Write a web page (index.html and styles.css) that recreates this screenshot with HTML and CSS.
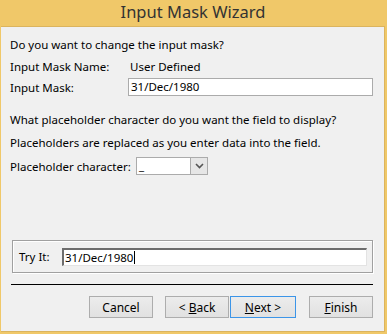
FILE: index.html
```html
<!DOCTYPE html>
<html>
<head>
<meta charset="utf-8">
<link rel="stylesheet" href="styles.css">
</head>
<body>
<div class="window">
  <div class="titlebar">Input Mask Wizard</div>
  <div class="client">
    <div class="line q1">Do you want to change the input mask?</div>
    <div class="row r-name"><span class="lbl">Input Mask Name:</span><span class="val">User Defined</span></div>
    <div class="row r-mask"><span class="lbl">Input Mask:</span><span class="textbox mask">31/Dec/1980</span></div>
    <div class="line q2">What placeholder character do you want the field to display?</div>
    <div class="line q3">Placeholders are replaced as you enter data into the field.</div>
    <div class="row r-ph"><span class="lbl">Placeholder character:</span><span class="combo"><span class="combo-text">_</span><span class="combo-btn"><svg width="9" height="6" viewBox="0 0 9 6"><path d="M1 1 L4.5 4.5 L8 1" fill="none" stroke="#555" stroke-width="1.6"/></svg></span></span></div>
    <div class="spacer"></div>
    <div class="tryit">
      <span class="try-lbl">Try It:</span>
      <span class="try-box">31/Dec/1980<span class="caret"></span></span>
    </div>
    <div class="sep"></div>
    <div class="buttons">
      <button class="btn">Cancel</button>
      <button class="btn back">&lt; <u>B</u>ack</button>
      <button class="btn next"><u>N</u>ext &gt;</button>
      <button class="btn finish"><u>F</u>inish</button>
    </div>
  </div>
</div>
</body>
</html>
```
FILE: styles.css
```css
* { box-sizing: border-box; }
html, body { margin: 0; padding: 0; }
body {
  width: 387px;
  height: 334px;
  overflow: hidden;
  font-family: "Noto Sans", "Open Sans", sans-serif;
  font-size: 11.5px;
  color: #000;
}
.window {
  width: 387px;
  height: 334px;
  background: #f0c869;
  display: flex;
  flex-direction: column;
  padding: 0 2px 2px 1px;
}
.titlebar {
  height: 26px;
  line-height: 24px;
  text-align: center;
  font-size: 16.5px;
  color: #333;
  flex: none;
}
.client {
  flex: 1;
  background: #f0f0f0;
  border: 1px solid #dbb45e;
  border-left: none;
  display: flex;
  flex-direction: column;
  padding: 0 11px 0 9px;
}
.line { height: 16px; line-height: 16px; white-space: nowrap; }
.q1 { margin-top: 10px; }
.row { display: flex; align-items: center; white-space: nowrap; }
.lbl { width: 120px; flex: none; }
.r-name { margin-top: 5px; height: 16px; }
.r-mask { margin-top: 4px; height: 18px; }
.textbox {
  display: block;
  flex: 1;
  height: 18px;
  line-height: 16px;
  background: #fff;
  border: 1px solid #ababab;
  padding-left: 2px;
  margin-left: -2px;
}
.q2 { margin-top: 16px; }
.q3 { margin-top: 7px; }
.r-ph { margin-top: 6px; height: 18px; }
.combo {
  display: flex;
  flex: none;
  width: 72px;
  height: 18px;
  margin-left: 6px;
  border: 1px solid #ababab;
  background: #fff;
}
.combo-text { flex: 1; padding-left: 2px; line-height: 16px; }
.combo-btn {
  width: 17px;
  background: #e6e6e6;
  border-left: 1px solid #ababab;
  display: flex;
  align-items: center;
  justify-content: center;
}
.spacer { flex: 1; }
.tryit {
  height: 33px;
  margin: 0 0 0 2px;
  border: 1px solid #a0a0a0;
  box-shadow: inset 1px 1px 0 #fff, 1px 1px 0 #fff;
  display: flex;
  align-items: center;
  padding-left: 6px;
}
.try-lbl { width: 43px; flex: none; }
.try-box {
  width: 305px;
  height: 18px;
  line-height: 15px;
  background: #fff;
  border-top: 2px solid #6d6d6d;
  border-left: 2px solid #6d6d6d;
  border-right: 1px solid #e3e3e3;
  border-bottom: 1px solid #e3e3e3;
  padding-left: 1px;
  display: flex;
  align-items: center;
}
.caret { display: inline-block; width: 1px; height: 13px; background: #000; margin-left: 1px; }
.sep {
  height: 1px;
  background: #000;
  margin-top: 11px;
  margin-left: 1px;
}
.buttons {
  display: flex;
  justify-content: flex-end;
  margin-top: 11px;
  margin-bottom: 13px;
}
.btn {
  font-family: inherit;
  font-size: 12px;
  color: #000;
  height: 22px;
  width: 64px;
  padding: 0;
  background: linear-gradient(#ececec, #e1e1e1);
  border: 1px solid #adadad;
  margin-left: 12px;
}
.btn u { text-decoration: underline; }
.back { margin-left: 12px; }
.next { margin-left: 1px; width: 66px; border-color: #3c95e8; }
.finish { margin-left: 13px; }
```
